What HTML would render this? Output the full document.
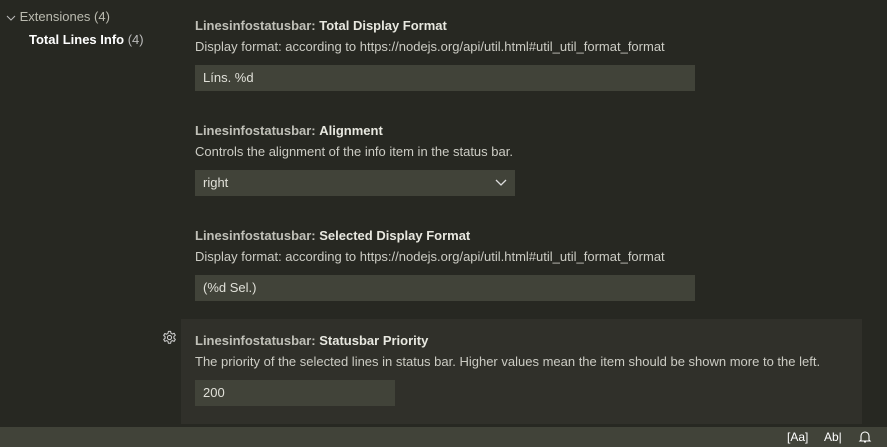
<!DOCTYPE html><html><head><style>
body{margin:0;width:887px;height:447px;background:#272822;font-family:"Liberation Sans",sans-serif;font-size:13px;color:#ccccc4;position:relative;overflow:hidden}
.a{position:absolute;white-space:nowrap}
.t{font-weight:bold;color:#c0c0b8}.t b{color:#e8e8e0}
.in{position:absolute;background:#414339;height:26px;line-height:26px;padding-left:8px;box-sizing:border-box;color:#e0e0d8}
</style></head><body>
<div class="a" style="left:6px;top:9px;color:#bbbbb0"><svg width="10" height="10" style="vertical-align:middle"><path d="M1 3l4 4 4-4" stroke="#bbb" fill="none"/></svg> Extensiones (4)</div>
<div class="a" style="left:29px;top:32px;color:#fff;font-weight:bold">Total Lines Info <span style="font-weight:normal;color:#bbb">(4)</span></div>

<div class="a t" style="left:195px;top:18px">Linesinfostatusbar: <b>Total Display Format</b></div>
<div class="a" style="left:195px;top:39px">Display format: according to https://nodejs.org/api/util.html#util_util_format_format</div>
<div class="in" style="left:195px;top:65px;width:500px">Líns. %d</div>

<div class="a t" style="left:195px;top:123px">Linesinfostatusbar: <b>Alignment</b></div>
<div class="a" style="left:195px;top:144px">Controls the alignment of the info item in the status bar.</div>
<div class="in" style="left:195px;top:170px;width:320px">right<svg width="12" height="8" style="position:absolute;right:8px;top:9px"><path d="M1 1l5 5 5-5" stroke="#ddd" fill="none" stroke-width="1.3"/></svg></div>

<div class="a t" style="left:195px;top:228px">Linesinfostatusbar: <b>Selected Display Format</b></div>
<div class="a" style="left:195px;top:249px">Display format: according to https://nodejs.org/api/util.html#util_util_format_format</div>
<div class="in" style="left:195px;top:275px;width:500px">(%d Sel.)</div>

<div class="a" style="left:181px;top:319px;width:681px;height:105px;background:#30302a"></div>
<svg class="a" style="left:162px;top:330px" width="15" height="15" viewBox="0 0 16 16"><path d="M6.8 1.5h2.4l.4 2 1.5.8 1.9-.8 1.2 2.1-1.5 1.3v1.8l1.5 1.3-1.2 2.1-1.9-.8-1.5.8-.4 2H6.8l-.4-2-1.5-.8-1.9.8-1.2-2.1L3.3 8.9V7.1L1.8 5.8 3 3.7l1.9.8 1.5-.8z" fill="none" stroke="#d0d0d0" stroke-width="1.1" stroke-linejoin="round"/><circle cx="8" cy="8" r="2.2" fill="none" stroke="#d0d0d0" stroke-width="1.1"/></svg>
<div class="a t" style="left:195px;top:333px">Linesinfostatusbar: <b>Statusbar Priority</b></div>
<div class="a" style="left:195px;top:354px">The priority of the selected lines in status bar. Higher values mean the item should be shown more to the left.</div>
<div class="in" style="left:195px;top:380px;width:200px">200</div>

<div class="a" style="left:0;top:427px;width:887px;height:20px;background:#414339"></div>
<div class="a" style="left:787px;top:430px;color:#fff;font-size:12px">[Aa]</div>
<div class="a" style="left:824px;top:430px;color:#fff;font-size:12px">Ab|</div>
<svg class="a" style="left:858px;top:430px" width="14" height="14" viewBox="0 0 14 14"><path d="M3 10V6a4 4 0 0 1 8 0v4l1 1H2z M6 12h2" fill="none" stroke="#fff" stroke-width="1.1"/></svg>
</body></html>
